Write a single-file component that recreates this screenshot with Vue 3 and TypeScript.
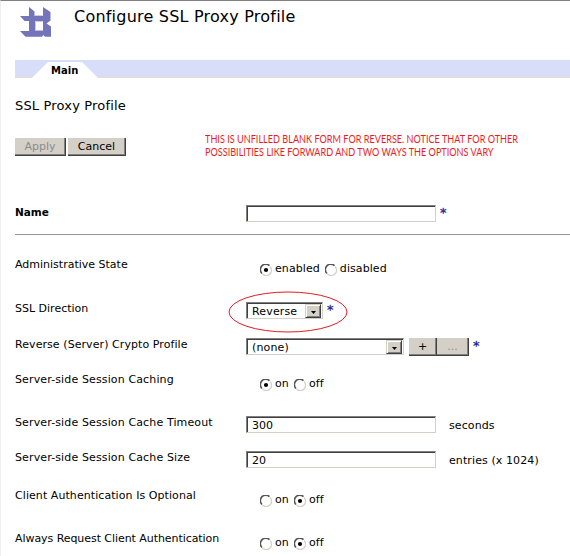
<script setup lang="ts">
import { reactive } from 'vue'

interface Field {
  key: string
  label: string
  kind: 'text' | 'radio' | 'select'
  size: string
  options?: string[]
  unit?: string
  required?: boolean
  actions?: boolean
  marked?: boolean
}

const fields: Field[] = [
  { key: 'state', label: 'Administrative State', kind: 'radio', size: 'h44', options: ['enabled', 'disabled'] },
  { key: 'direction', label: 'SSL Direction', kind: 'select', size: 'h36', options: ['Reverse', 'Forward', 'Two Way'], required: true, marked: true },
  { key: 'crypto', label: 'Reverse (Server) Crypto Profile', kind: 'select', size: 'h35 mid', options: ['(none)'], required: true, actions: true },
  { key: 'caching', label: 'Server-side Session Caching', kind: 'radio', size: 'h43 wide', options: ['on', 'off'] },
  { key: 'timeout', label: 'Server-side Session Cache Timeout', kind: 'text', size: 'h35 wide', unit: 'seconds' },
  { key: 'cacheSize', label: 'Server-side Session Cache Size', kind: 'text', size: 'h38 wide', unit: 'entries (x 1024)' },
  { key: 'authOptional', label: 'Client Authentication Is Optional', kind: 'radio', size: 'h43 mid', options: ['on', 'off'] },
  { key: 'authAlways', label: 'Always Request Client Authentication', kind: 'radio', size: 'h25 tight', options: ['on', 'off'] },
]

const form = reactive<Record<string, string>>({
  name: '',
  state: 'enabled',
  direction: 'Reverse',
  crypto: '(none)',
  caching: 'on',
  timeout: '300',
  cacheSize: '20',
  authOptional: 'off',
  authAlways: 'off',
})
</script>

<template>
  <main class="page">
    <header class="header">
      <svg class="logo" width="32" height="31" viewBox="0 0 32 31">
        <path
          fill="#7474b9"
          fill-rule="evenodd"
          d="M9 0L14.500 4.500V9H23V0L30.500 5V13.500L26.500 16.500L31 19.500V29.700H25L23.500 28L22 29.700H5.500L0 24H9V14H4.500L0 9H9ZM15 14V23.500H23V14Z"
        />
        <path fill="none" stroke="#c9c9e6" stroke-width="1" d="M15.500 23.500V14.500H22.500M15 8.500H22.500" />
      </svg>
      <h1>Configure SSL Proxy Profile</h1>
    </header>

    <nav class="tabs"><span class="tab">Main</span></nav>

    <h2>SSL Proxy Profile</h2>

    <div class="toolbar">
      <button class="btn apply" disabled>Apply</button>
      <button class="btn cancel">Cancel</button>
      <p class="note">
        THIS IS UNFILLED BLANK FORM FOR REVERSE. NOTICE THAT FOR OTHER<br />
        POSSIBILITIES LIKE FORWARD AND TWO WAYS THE OPTIONS VARY
      </p>
    </div>

    <div class="row name">
      <span class="label">Name</span>
      <div class="control">
        <input v-model="form.name" class="text" type="text" />
        <span class="star">*</span>
      </div>
    </div>

    <div v-for="f in fields" :key="f.key" class="row" :class="f.size">
      <span class="label">{{ f.label }}</span>

      <div v-if="f.kind === 'radio'" class="radios">
        <label v-for="o in f.options" :key="o" class="radio">
          <input v-model="form[f.key]" type="radio" :name="f.key" :value="o" />
          <svg width="12" height="12" viewBox="0 0 12 12">
            <circle cx="6" cy="6" r="5" fill="#fff" />
            <path d="M2 9.500A5.300 5.300 0 0 1 9.500 1.700" fill="none" stroke="#555" stroke-width="1.600" />
            <path d="M10 2.500A5.200 5.200 0 0 1 2.500 10" fill="none" stroke="#d4d0c8" stroke-width="1.200" />
            <circle v-if="form[f.key] === o" cx="6" cy="6" r="2.100" fill="#000" />
          </svg>
          <span>{{ o }}</span>
        </label>
      </div>

      <div v-else-if="f.kind === 'select'" class="control" :class="{ marked: f.marked }">
        <div class="select" :class="f.key">
          <select v-model="form[f.key]">
            <option v-for="o in f.options" :key="o">{{ o }}</option>
          </select>
          <span class="arrow">
            <svg width="5" height="3" viewBox="0 0 5 3"><path d="M0 0H5L2.500 3Z" /></svg>
          </span>
        </div>
        <div v-if="f.actions" class="actions">
          <button class="btn plus">+</button>
          <button class="btn more" disabled>...</button>
        </div>
        <span v-if="f.required" class="star">*</span>
        <svg v-if="f.marked" class="ring" width="120" height="42" viewBox="0 0 120 42">
          <ellipse cx="60" cy="21" rx="59" ry="20" fill="none" stroke="#e01b24" />
        </svg>
      </div>

      <div v-else class="control">
        <input v-model="form[f.key]" class="text" type="text" />
        <span class="unit">{{ f.unit }}</span>
      </div>
    </div>
  </main>
</template>

<style>
body {
  margin: 0;
  background: #fff;
}
</style>

<style scoped>
* {
  box-sizing: border-box;
}
.page {
  height: 556px;
  overflow: hidden;
  border-top: 1px solid #808080;
  border-left: 1px solid #eee;
  padding-left: 14px;
  background: #fff;
  color: #000;
  font: 11px/14px 'DejaVu Sans', sans-serif;
}
.header {
  display: flex;
  height: 59px;
  padding: 6px 0 0 5px;
}
.logo {
  flex: none;
}
h1 {
  margin: 0 0 0 22px;
  font-size: 16px;
  font-weight: 400;
  line-height: 20px;
  letter-spacing: 0.22px;
  white-space: nowrap;
}
.tabs {
  display: flex;
  height: 18px;
  padding: 2px 0 0 17px;
  background: linear-gradient(#d8ddf9 0 16px, #dedede 16px);
}
.tab {
  width: 66px;
  padding: 2px 0 0 19px;
  background: #fff;
  clip-path: polygon(16px 0, 50px 0, 100% 100%, 0 100%);
  font-weight: 700;
  font-size: 10px;
}
h2 {
  margin: 19px 0 0;
  font-size: 13px;
  font-weight: 400;
  line-height: 18px;
  letter-spacing: 0.17px;
}
.toolbar {
  display: flex;
  gap: 2px;
  height: 66px;
  margin-top: 23px;
}
.btn {
  flex: none;
  height: 18px;
  padding: 1px 0 0;
  border: solid #404040;
  border-width: 0 1px 1px 0;
  box-shadow: inset -1px -1px #808080;
  background: #d4d0c8;
  color: #000;
  font: inherit;
  line-height: 16px;
}
.btn:disabled {
  color: #8c8c8c;
}
.apply {
  width: 51px;
}
.cancel {
  width: 58px;
}
.note {
  margin: -6px 0 0 77px;
  color: #ed1c24;
  font: 11px/13px Lato, sans-serif;
  white-space: nowrap;
  transform: scaleX(0.829);
  transform-origin: 0 0;
}
.row {
  display: grid;
  grid-template-columns: 231px 1fr;
  align-items: start;
  white-space: nowrap;
}
.label {
  padding-top: 1px;
}
.wide .label {
  letter-spacing: 0.13px;
}
.mid .label {
  letter-spacing: 0.07px;
}
.tight .label {
  letter-spacing: -0.06px;
}
.name {
  height: 31px;
  margin-bottom: 22px;
  border-bottom: 1px solid #969696;
}
.name .label {
  font-weight: 700;
  font-size: 10.500px;
}
.h25 { height: 25px; }
.h35 { height: 35px; }
.h36 { height: 36px; }
.h38 { height: 38px; }
.h43 { height: 43px; }
.h44 { height: 44px; }
.control {
  display: flex;
  height: 18px;
  margin-top: 1px;
}
.marked {
  position: relative;
}
.text,
.select {
  height: 17px;
  border: 1px solid;
  border-color: #808080 #d4d0c8 #d4d0c8 #808080;
  box-shadow: inset 1px 1px #404040;
  background: #fff;
}
.text {
  width: 190px;
  padding: 2px 5px 0;
  font: inherit;
  outline: none;
}
.star {
  margin-left: 4px;
  padding-top: 1px;
  color: #1d1d8f;
  font-size: 13px;
  -webkit-text-stroke: 0.3px #1d1d8f;
}
.unit {
  margin: 3px 0 0 13px;
  letter-spacing: 0.1px;
}
.select {
  display: flex;
  padding: 1px 1px 0 1px;
}
.direction {
  width: 77px;
}
.crypto {
  width: 158px;
}
select {
  flex: 1;
  min-width: 0;
  height: 15px;
  padding: 1px 0 0 4px;
  border: 0;
  appearance: none;
  background: none;
  font: inherit;
  line-height: 14px;
  letter-spacing: 0.15px;
  outline: none;
}
.arrow {
  display: flex;
  justify-content: center;
  align-items: center;
  width: 16px;
  height: 14px;
  padding-top: 3px;
  border: 1px solid;
  border-color: #d4d0c8 #404040 #404040 #d4d0c8;
  box-shadow: inset 1px 1px #fff, inset -1px -1px #808080;
  background: #d4d0c8;
}
.actions {
  display: flex;
  margin-left: 5px;
}
.plus {
  width: 28px;
}
.more {
  width: 32px;
}
.ring {
  position: absolute;
  left: -18px;
  top: -11px;
}
.radios {
  display: flex;
  gap: 5px;
  padding: 5px 0 0 14px;
  letter-spacing: 0.08px;
}
.radio {
  display: flex;
  gap: 3px;
}
.radio input {
  position: absolute;
  opacity: 0;
}
.radio svg {
  margin-top: 2px;
}
</style>
